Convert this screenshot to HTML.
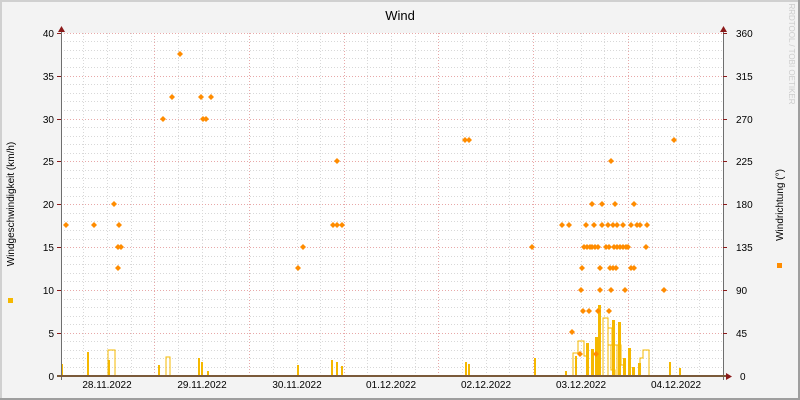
<!DOCTYPE html>
<html><head><meta charset="utf-8"><style>
html,body{margin:0;padding:0;background:#f3f3f3;}
svg{display:block;font-family:"Liberation Sans","DejaVu Sans",sans-serif;}
</style></head><body>
<svg width="800" height="400" viewBox="0 0 800 400" xmlns="http://www.w3.org/2000/svg">
<rect x="0" y="0" width="800" height="400" fill="#f3f3f3"/>
<rect x="0" y="0" width="800" height="2" fill="#d0d0d0"/>
<rect x="0" y="0" width="2" height="400" fill="#d0d0d0"/>
<rect x="798" y="0" width="2" height="400" fill="#9e9e9e"/>
<rect x="0" y="398" width="800" height="2" fill="#9e9e9e"/>
<rect x="61" y="33" width="662" height="343" fill="#ffffff"/>
<g stroke="#d8d8d8" stroke-dasharray="1,2" shape-rendering="crispEdges">
<path d="M61 41.5H723M61 50.5H723M61 58.5H723M61 67.5H723M61 84.5H723M61 93.5H723M61 101.5H723M61 110.5H723M61 127.5H723M61 136.5H723M61 144.5H723M61 153.5H723M61 170.5H723M61 178.5H723M61 187.5H723M61 196.5H723M61 213.5H723M61 221.5H723M61 230.5H723M61 239.5H723M61 256.5H723M61 264.5H723M61 273.5H723M61 281.5H723M61 299.5H723M61 307.5H723M61 316.5H723M61 324.5H723M61 341.5H723M61 350.5H723M61 358.5H723M61 367.5H723"/>
<path d="M83.5 33V376M107.5 33V376M131.5 33V376M178.5 33V376M202.5 33V376M225.5 33V376M273.5 33V376M297.5 33V376M320.5 33V376M367.5 33V376M391.5 33V376M415.5 33V376M462.5 33V376M486.5 33V376M509.5 33V376M557.5 33V376M581.5 33V376M604.5 33V376M652.5 33V376M676.5 33V376M699.5 33V376"/>
</g>
<g stroke="#e8a8a8" stroke-dasharray="1,2" shape-rendering="crispEdges">
<path d="M61 33.5H723M61 76.5H723M61 119.5H723M61 161.5H723M61 204.5H723M61 247.5H723M61 290.5H723M61 333.5H723"/>
<path d="M154.5 33V376M249.5 33V376M344.5 33V376M438.5 33V376M533.5 33V376M628.5 33V376"/>
</g>
<g fill="#f5b800">
<rect x="61" y="364" width="2" height="12"/>
<rect x="87" y="352" width="2" height="24"/>
<rect x="108" y="360" width="2" height="16"/>
<rect x="158" y="365" width="2" height="11"/>
<rect x="198" y="358" width="2" height="18"/>
<rect x="201" y="362" width="2" height="14"/>
<rect x="207" y="371" width="2" height="5"/>
<rect x="297" y="365" width="2" height="11"/>
<rect x="331" y="360" width="2" height="16"/>
<rect x="336" y="362" width="2" height="14"/>
<rect x="341" y="366" width="2" height="10"/>
<rect x="465" y="362" width="2" height="14"/>
<rect x="468" y="364" width="2" height="12"/>
<rect x="534" y="358" width="2" height="18"/>
<rect x="565" y="371" width="2" height="5"/>
<rect x="575" y="356" width="2" height="20"/>
<rect x="586" y="343" width="3" height="33"/>
<rect x="591" y="349" width="3" height="27"/>
<rect x="595" y="337" width="3" height="39"/>
<rect x="598" y="305" width="3" height="71"/>
<rect x="612" y="320" width="3" height="56"/>
<rect x="618" y="322" width="3" height="54"/>
<rect x="623" y="358" width="3" height="18"/>
<rect x="628" y="348" width="3" height="28"/>
<rect x="632" y="367" width="3" height="9"/>
<rect x="638" y="363" width="3" height="13"/>
<rect x="669" y="362" width="2" height="14"/>
<rect x="679" y="368" width="2" height="8"/>
</g>
<g fill="none" stroke="#f5b800" stroke-width="1">
<path d="M108 376V350H115V376"/>
<path d="M166 376V357H170V376"/>
<path d="M573 376V353H578V341H584V356H588V376"/>
<path d="M603 376V318H608V345H611V370H615V376"/>
<path d="M617 376V345H621V365H624V376"/>
<path d="M640 376V358H643V350H649V376"/>
<path d="M608 376V328H612V345H620V376"/>
</g>
<g shape-rendering="crispEdges">
<rect x="61" y="30" width="1" height="350" fill="#6e6e6e"/>
<rect x="723" y="30" width="1" height="350" fill="#6e6e6e"/>
<rect x="57" y="375" width="670" height="2" fill="#7a5a3a"/>
</g>
<path d="M58 32L61.5 26L65 32Z" fill="#8b1a1a"/>
<path d="M720 32L723.5 26L727 32Z" fill="#8b1a1a"/>
<path d="M726 373L732 376.5L726 380Z" fill="#8b1a1a"/>
<g stroke="#8b1a1a" shape-rendering="crispEdges">
<path d="M57 33.5H61M57 76.5H61M57 119.5H61M57 161.5H61M57 204.5H61M57 247.5H61M57 290.5H61M57 333.5H61M723 33.5H727M723 76.5H727M723 119.5H727M723 161.5H727M723 204.5H727M723 247.5H727M723 290.5H727M723 333.5H727"/>
</g>
<g fill="#ff8c00" id="pts"></g>
<text x="400" y="20" font-size="13" text-anchor="middle" fill="#000">Wind</text>
<g font-size="10" fill="#000" text-anchor="end">
<text x="54" y="37">40</text><text x="54" y="80">35</text><text x="54" y="123">30</text><text x="54" y="165">25</text><text x="54" y="208">20</text><text x="54" y="251">15</text><text x="54" y="294">10</text><text x="54" y="337">5</text><text x="54" y="380">0</text>
</g>
<g font-size="10" fill="#000" text-anchor="start">
<text x="736" y="37">360</text><text x="736" y="80">315</text><text x="736" y="123">270</text><text x="736" y="165">225</text><text x="736" y="208">180</text><text x="736" y="251">135</text><text x="736" y="294">90</text><text x="736" y="337">45</text><text x="740" y="380">0</text>
</g>
<g font-size="10" fill="#000" text-anchor="middle">
<text x="107" y="388">28.11.2022</text><text x="202" y="388">29.11.2022</text><text x="297" y="388">30.11.2022</text><text x="391" y="388">01.12.2022</text><text x="486" y="388">02.12.2022</text><text x="581" y="388">03.12.2022</text><text x="676" y="388">04.12.2022</text>
</g>
<text transform="translate(14,204) rotate(-90)" font-size="10" text-anchor="middle" fill="#000">Windgeschwindigkeit (km/h)</text>
<text transform="translate(783,205) rotate(-90)" font-size="10" text-anchor="middle" fill="#000">Windrichtung (°)</text>
<text transform="translate(789,54) rotate(90)" font-size="8" text-anchor="middle" fill="#cccccc">RRDTOOL / TOBI OETIKER</text>
<rect x="8" y="298" width="5" height="5" fill="#f5b800"/>
<rect x="777" y="263" width="5" height="5" fill="#ff8c00"/>
</svg>
<script>
(function(){
var P=[[66,225],[94,225],[114,204],[119,225],[118,247],[121,247],[118,268],[163,119],[172,97],[180,54],[201,97],[203,119],[206,119],[211,97],[298,268],[303,247],[333,225],[337,161],[337,225],[342,225],[465,140],[469,140],[532,247],[562,225],[569,225],[572,332],[580,354],[581,290],[582,268],[583,311],[584,247],[586,225],[587,247],[589,311],[590,247],[592,204],[592,247],[594,225],[595,247],[596,354],[598,247],[598,311],[600,268],[600,290],[602,204],[602,225],[606,247],[608,225],[609,247],[609,311],[610,268],[611,290],[611,161],[613,225],[613,268],[614,247],[615,204],[616,268],[617,225],[617,247],[620,247],[623,225],[623,247],[625,290],[626,247],[628,247],[631,225],[631,268],[634,204],[634,268],[637,225],[640,225],[646,247],[647,225],[664,290],[674,140]];
var g=document.getElementById('pts'),ns='http://www.w3.org/2000/svg';
P.forEach(function(p){var e=document.createElementNS(ns,'path');e.setAttribute('d','M'+p[0]+' '+(p[1]-3)+'L'+(p[0]+3)+' '+p[1]+'L'+p[0]+' '+(p[1]+3)+'L'+(p[0]-3)+' '+p[1]+'Z');g.appendChild(e);});
})();
</script>
</body></html>
